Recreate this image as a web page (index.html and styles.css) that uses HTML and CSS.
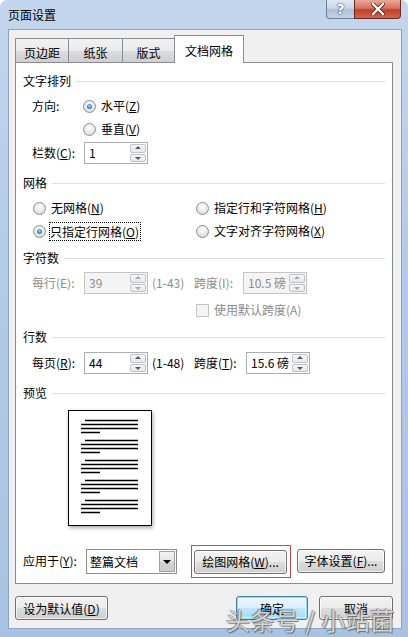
FILE: index.html
```html
<!DOCTYPE html>
<html lang="zh-CN">
<head>
  <meta charset="UTF-8">
  <title>页面设置</title>
  <link rel="stylesheet" href="styles.css">
</head>
<body>
  <div class="window">
    <div class="titlebar">
      <span class="title">页面设置</span>
      <div class="caption">
        <span class="cap-btn help">?</span>
        <span class="cap-btn close">
          <svg width="14" height="12" viewBox="0 0 14 12"><path d="M2 1 L12 11 M12 1 L2 11" stroke="#5a2a22" stroke-width="4" stroke-linecap="round"/><path d="M2 1 L12 11 M12 1 L2 11" stroke="#fff" stroke-width="2.4" stroke-linecap="round"/></svg>
        </span>
      </div>
    </div>

    <div class="client">
      <div class="tabs">
        <span class="tab t1">页边距</span>
        <span class="tab t2">纸张</span>
        <span class="tab t3">版式</span>
        <span class="tab t4 active">文档网格</span>
      </div>

      <div class="panel">
        <div class="heading h1"><span>文字排列</span></div>
        <div class="row dir">
          <span class="label w51">方向:</span>
          <span class="radio checked"><i></i>水平(<u>Z</u>)</span>
        </div>
        <div class="row vert">
          <span class="radio"><i></i>垂直(<u>V</u>)</span>
        </div>
        <div class="row tall cols">
          <span class="label w52">栏数(<u>C</u>):</span>
          <span class="spin"><span class="val">1</span><span class="arrows"><b class="up"></b><b class="down"></b></span></span>
        </div>

        <div class="heading h2"><span>网格</span></div>
        <div class="grid-opts">
          <span class="radio"><i></i>无网格(<u>N</u>)</span>
          <span class="radio"><i></i>指定行和字符网格(<u>H</u>)</span>
          <span class="radio checked"><i></i><em class="focus">只指定行网格(<u>O</u>)</em></span>
          <span class="radio"><i></i>文字对齐字符网格(<u>X</u>)</span>
        </div>

        <div class="heading h3"><span>字符数</span></div>
        <div class="row tall chars disabled">
          <span class="label w52">每行(E):</span>
          <span class="spin"><span class="val">39</span><span class="arrows"><b class="up"></b><b class="down"></b></span></span>
          <span class="range">(1-43)</span>
          <span class="label w49">跨度(I):</span>
          <span class="spin"><span class="val">10.5 磅</span><span class="arrows"><b class="up"></b><b class="down"></b></span></span>
        </div>
        <div class="row check disabled">
          <span class="checkbox"><i></i>使用默认跨度(A)</span>
        </div>

        <div class="heading h4"><span>行数</span></div>
        <div class="row tall lines">
          <span class="label w52">每页(<u>R</u>):</span>
          <span class="spin"><span class="val">44</span><span class="arrows"><b class="up"></b><b class="down"></b></span></span>
          <span class="range">(1-48)</span>
          <span class="label w52">跨度(<u>T</u>):</span>
          <span class="spin"><span class="val">15.6 磅</span><span class="arrows"><b class="up"></b><b class="down"></b></span></span>
        </div>

        <div class="heading h5"><span>预览</span></div>
        <div class="preview">
          <svg width="82" height="114" viewBox="0 0 82 114">
            <g stroke="#000" stroke-width="1.3">
              <path d="M16 9.5 H69 M12 13.5 H69 M12 17.5 H69 M12 21.5 H31"/>
              <path d="M16 29.5 H69 M12 33.5 H69 M12 37.5 H69 M12 41.5 H31"/>
              <path d="M16 49.5 H69 M12 53.5 H69 M12 57.5 H69 M12 61.5 H31"/>
              <path d="M16 69.5 H69 M12 73.5 H69 M12 77.5 H69 M12 81.5 H31"/>
              <path d="M16 89.5 H69 M12 93.5 H69 M12 97.5 H69 M12 101.5 H31"/>
            </g>
          </svg>
        </div>

        <div class="row apply">
          <span class="label w63">应用于(<u>Y</u>):</span>
          <span class="select"><span class="val">整篇文档</span><span class="drop"></span></span>
          <span class="mark"><span class="btn draw">绘图网格(<u>W</u>)...</span></span>
          <span class="btn font">字体设置(<u>F</u>)...</span>
        </div>
      </div>

      <div class="footer">
        <span class="btn default">设为默认值(<u>D</u>)</span>
        <span class="btn ok">确定</span>
        <span class="btn cancel">取消</span>
      </div>
    </div>

    <div class="watermark">头条号 / 小站菌</div>
  </div>
</body>
</html>
```

FILE: styles.css
```css
* {
  box-sizing: border-box;
}

body {
  margin: 0;
  background: #fff;
  font-family: "Noto Sans CJK SC", "Noto Sans", sans-serif;
  font-size: 12px;
  color: #000;
}

u {
  text-decoration: underline;
  text-underline-offset: 1px;
}

.window {
  position: relative;
  width: 408px;
  height: 637px;
  padding: 0 6px 8px 8px;
  border-radius: 7px 7px 0 0;
  background: linear-gradient(180deg, #c3d6ee 0%, #b4cbe8 40%, #a8c2e2 100%);
  overflow: hidden;
}

.titlebar {
  height: 29px;
  display: flex;
  align-items: center;
}

.title {
  font-size: 12px;
  line-height: 18px;
  color: #000;
}

.caption {
  margin-left: auto;
  margin-right: 1px;
  align-self: flex-start;
  display: flex;
}

.cap-btn {
  height: 19px;
  display: flex;
  align-items: center;
  justify-content: center;
  border: 1px solid #6d7f99;
  border-top: none;
}

.help {
  width: 28px;
  border-right: none;
  border-radius: 0 0 0 4px;
  background: linear-gradient(180deg, #dfe8f4 0%, #c9d7ea 45%, #aebfd8 55%, #c3d3e8 100%);
  color: #fff;
  font-family: "DejaVu Sans", sans-serif;
  font-size: 14px;
  font-weight: bold;
  text-shadow: 0 0 2px #3b4a60, 0 0 1px #3b4a60;
}

.close {
  width: 47px;
  border-radius: 0 0 4px 0;
  border-color: #6b2a20;
  background: linear-gradient(180deg, #e9a898 0%, #d9735d 45%, #c1412a 55%, #d3644a 100%);
}

.client {
  height: 600px;
  padding: 5px 8px 0 6px;
  background: #f0f0f0;
  border: 1px solid #8ca4c3;
}

/* tabs */
.tabs {
  display: flex;
  align-items: flex-end;
  height: 27px;
}

.tab {
  height: 24px;
  display: flex;
  align-items: center;
  justify-content: center;
  padding-top: 4px;
  border: 1px solid #898c95;
  border-bottom: none;
  background: linear-gradient(180deg, #f2f2f2 0%, #ebebeb 50%, #dddddd 51%, #cfcfcf 100%);
  line-height: 16px;
}

.tab + .tab {
  margin-left: -1px;
}

.t1 { width: 54px; }
.t2 { width: 55px; }
.t3 { width: 53px; }

.t4 {
  width: 70px;
}

.tab.active {
  position: relative;
  z-index: 1;
  height: 28px;
  margin-bottom: -1px;
  padding-top: 2px;
  background: #fff;
}

.panel {
  height: 522px;
  padding-top: 9px;
  background: #fff;
  border: 1px solid #898c95;
}

.heading {
  height: 18px;
  padding: 0 7px;
  display: flex;
  align-items: center;
  gap: 5px;
  line-height: 18px;
}

.heading::after {
  content: "";
  flex: 1;
  height: 1px;
  background: #d9dfe6;
}

.h2 { margin-top: 10px; }
.h3 { margin-top: 9px; }
.h4 { margin-top: 9px; }
.h5 { margin-top: 10px; }

.row {
  height: 18px;
  padding-left: 16px;
  display: flex;
  align-items: center;
  line-height: 18px;
}

.row.tall {
  height: 22px;
}

.dir { margin-top: 7px; }
.vert { margin-top: 5px; padding-left: 67px; }
.cols { margin-top: 4px; }
.chars { margin-top: 5px; }
.check { margin-top: 7px; padding-left: 180px; }
.lines { margin-top: 6px; }

.label { flex: none; }
.w49 { width: 49px; }
.w51 { width: 51px; }
.w52 { width: 52px; }
.w63 { width: 63px; }

.range {
  width: 46px;
  padding-left: 4px;
  flex: none;
}

.disabled {
  color: #8b8b8b;
}

/* radio & checkbox */
.radio,
.checkbox {
  display: inline-flex;
  align-items: center;
  white-space: nowrap;
}

.radio i {
  position: relative;
  width: 13px;
  height: 13px;
  margin-right: 5px;
  border-radius: 50%;
  border: 1px solid #8e8f8f;
  background: radial-gradient(circle at 50% 35%, #ffffff 0%, #eeeeee 40%, #cfcfcf 100%);
  flex: none;
}

.radio.checked i::after {
  content: "";
  position: absolute;
  left: 3px;
  top: 3px;
  width: 5px;
  height: 5px;
  border-radius: 50%;
  background: radial-gradient(circle at 50% 40%, #a9e0ff 0%, #3b8fd6 50%, #164f8f 100%);
}

.checkbox i {
  width: 13px;
  height: 13px;
  margin-right: 5px;
  border: 1px solid #c4c4c4;
  background: #f4f4f4;
  flex: none;
}

.focus {
  font-style: normal;
  outline: 1px dotted #000;
  outline-offset: 0;
  padding: 0 1px 0 0;
  margin-left: -1px;
  line-height: 17px;
}

.grid-opts {
  margin-top: 7px;
  padding-left: 17px;
  display: grid;
  grid-template-columns: 163px 1fr;
  grid-auto-rows: 18px;
  row-gap: 5px;
  align-items: center;
  line-height: 18px;
}

/* spin boxes */
.spin {
  width: 64px;
  height: 22px;
  display: flex;
  flex: none;
  border: 1px solid #abadb3;
  background: #fff;
  color: #000;
}

.spin .val {
  flex: 1;
  padding-left: 4px;
  line-height: 20px;
  white-space: nowrap;
}

.arrows {
  width: 17px;
  padding: 1px 1px 1px 0;
  display: flex;
  flex-direction: column;
  gap: 1px;
}

.arrows b {
  flex: 1;
  position: relative;
  border: 1px solid #c0c3c8;
  border-radius: 2px;
  background: linear-gradient(180deg, #f7f7f7 0%, #e8e8e8 100%);
}

.arrows b::after {
  content: "";
  position: absolute;
  left: 50%;
  top: 50%;
  margin-left: -3px;
  border-left: 3px solid transparent;
  border-right: 3px solid transparent;
}

.arrows .up::after {
  margin-top: -2px;
  border-bottom: 3px solid #4a5a70;
}

.arrows .down::after {
  margin-top: -1px;
  border-top: 3px solid #4a5a70;
}

.disabled .spin {
  border-color: #c5c5c5;
  background: #f4f4f4;
  color: #8b8b8b;
}

.disabled .arrows b::after {
  border-bottom-color: #a8a8a8;
  border-top-color: #a8a8a8;
}

.disabled .arrows .up::after {
  border-top-color: transparent;
}

.disabled .arrows .down::after {
  border-bottom-color: transparent;
}

/* preview */
.preview {
  width: 84px;
  height: 116px;
  margin: 8px 0 0 52px;
  border: 1px solid #000;
  background: #fff;
  box-shadow: 1px 2px 4px rgba(0, 0, 0, 0.35);
}

.preview svg {
  display: block;
}

/* apply row */
.apply {
  height: 34px;
  margin-top: 18px;
  padding-left: 7px;
}

.select {
  width: 91px;
  height: 25px;
  display: flex;
  flex: none;
  border: 1px solid #8a8c90;
  background: #fff;
}

.select .val {
  flex: 1;
  padding-left: 3px;
  line-height: 23px;
}

.drop {
  position: relative;
  width: 16px;
  margin: 1px;
  border: 1px solid #9ea2a8;
  background: linear-gradient(180deg, #f2f2f2 0%, #e4e4e4 50%, #d4d4d4 51%, #cccccc 100%);
}

.drop::after {
  content: "";
  position: absolute;
  left: 3px;
  top: 8px;
  border-left: 4px solid transparent;
  border-right: 4px solid transparent;
  border-top: 4px solid #000;
}

.mark {
  margin-left: 14px;
  padding: 4px 3px 3px 2px;
  border: 1px solid #d24646;
  flex: none;
}

.btn {
  height: 24px;
  display: inline-flex;
  align-items: center;
  justify-content: center;
  border: 1px solid #707070;
  border-radius: 3px;
  background: linear-gradient(180deg, #f2f2f2 0%, #ebebeb 50%, #dddddd 51%, #cfcfcf 100%);
  box-shadow: inset 0 0 0 1px rgba(255, 255, 255, 0.7);
  white-space: nowrap;
  flex: none;
}

.draw { width: 93px; }

.font {
  width: 88px;
  margin-left: 6px;
}

.footer {
  margin-top: 12px;
  display: flex;
  gap: 11px;
}

.default { width: 93px; }

.ok {
  width: 72px;
  margin-left: auto;
  border-color: #3c7fb1;
  background: linear-gradient(180deg, #eaf6fd 0%, #d9f0fc 50%, #bee6fd 51%, #a7d9f5 100%);
  box-shadow: inset 0 0 0 1px #9ad7f5, inset 0 0 0 2px rgba(255, 255, 255, 0.6);
}

.cancel {
  width: 74px;
  margin-right: 0;
}

.watermark {
  position: absolute;
  left: 226px;
  top: 605px;
  font-size: 24px;
  line-height: 30px;
  color: rgba(255, 255, 255, 0.75);
  letter-spacing: 0.5px;
  text-shadow: 0 0 1px #555, 1px 1px 1px rgba(60, 60, 60, 0.6), -1px -1px 1px rgba(60, 60, 60, 0.4);
  white-space: nowrap;
}
```
